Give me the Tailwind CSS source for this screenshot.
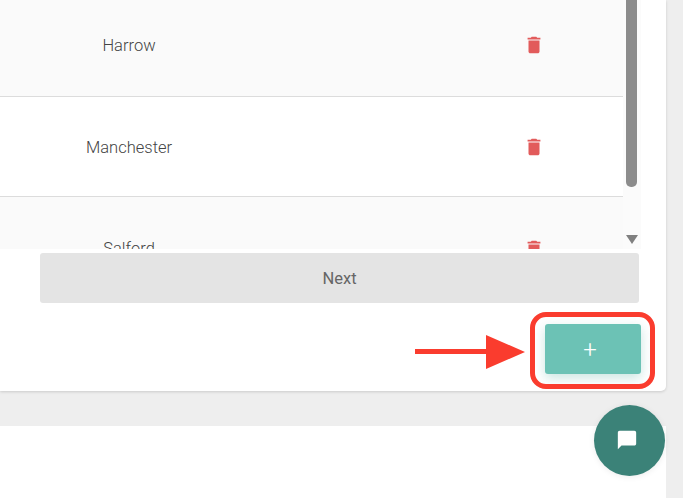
<!DOCTYPE html>
<html lang="en">
<head>
    <meta charset="UTF-8">
    <meta name="viewport" content="width=device-width, initial-scale=1.0">
    <title>Locations</title>
    <script src="https://cdn.jsdelivr.net/npm/@tailwindcss/browser@4"></script>
</head>
<body class="relative h-[498px] w-[683px] overflow-hidden bg-[#eeeeee] font-['Roboto',sans-serif] text-[16px] font-light text-[#444444]">
    <!-- card with the table -->
    <div class="h-[391px] w-[666px] rounded-br-[5px] bg-white shadow-[0_1px_3px_rgba(0,0,0,0.15)]">
        <div class="flex h-[249px]">
            <div class="h-[249px] w-[623px] overflow-hidden">
                <div class="grid h-[97px] grid-cols-[258px_1fr_178px] items-center border-b border-[#dcdcdc] bg-[#fafafa] pb-[6px]">
                    <span class="pt-[2px] text-center text-[16.5px]">Harrow</span>
                    <span></span>
                    <svg class="mx-auto h-[22px] w-[22px] fill-[#e25b5b]" viewBox="0 0 24 24"><path d="M6 19c0 1.1.9 2 2 2h8c1.1 0 2-.9 2-2V7H6v12zM19 4h-3.5l-1-1h-5l-1 1H5v2h14V4z"/></svg>
                </div>
                <div class="grid h-[100px] grid-cols-[258px_1fr_178px] items-center border-b border-[#dcdcdc] bg-white">
                    <span class="pt-[4px] text-center text-[16.5px]">Manchester</span>
                    <span></span>
                    <svg class="mx-auto h-[22px] w-[22px] fill-[#e25b5b]" viewBox="0 0 24 24"><path d="M6 19c0 1.1.9 2 2 2h8c1.1 0 2-.9 2-2V7H6v12zM19 4h-3.5l-1-1h-5l-1 1H5v2h14V4z"/></svg>
                </div>
                <div class="grid h-[103px] grid-cols-[258px_1fr_178px] items-center bg-[#fafafa]">
                    <span class="pt-[2px] text-center text-[16.5px]">Salford</span>
                    <span></span>
                    <svg class="mx-auto h-[22px] w-[22px] fill-[#e25b5b]" viewBox="0 0 24 24"><path d="M6 19c0 1.1.9 2 2 2h8c1.1 0 2-.9 2-2V7H6v12zM19 4h-3.5l-1-1h-5l-1 1H5v2h14V4z"/></svg>
                </div>
            </div>
            <!-- scrollbar -->
            <div class="flex h-[249px] w-[18px] flex-col items-center bg-[#fbfbfb] pl-[1px] pr-[2px]">
                <div class="h-[187px] w-[11px] rounded-b-[5px] bg-[#8c8c8c]"></div>
                <svg class="mt-[48px] h-[9px] w-[12px] fill-[#808080]" viewBox="0 0 12 9"><path d="M0 0h12L6 9z"/></svg>
            </div>
        </div>

        <div class="ml-[40px] mt-[4px] flex h-[50px] w-[599px] items-center justify-center rounded-[3px] bg-[#e4e4e4] pt-[3px] text-[16.5px] font-normal text-[#666666]">Next</div>

        <div class="mt-[21px] flex w-[641px] justify-end">
            <button class="flex h-[50px] w-[96px] items-center justify-center rounded-[3px] bg-[#6cc2b5] pr-[6px] pt-[1px] text-[24px] font-light text-white shadow-[0_4px_12px_rgba(80,170,155,0.3)]">+</button>
        </div>
    </div>

    <!-- lower panel -->
    <div class="mt-[35px] h-[72px] w-[666px] bg-white"></div>

    <!-- annotation over the add button -->
    <div class="absolute left-[530px] top-[312px] h-[77px] w-[125px] rounded-[16px] border-[5px] border-[#fa3c2e]"></div>
    <svg class="absolute left-[414px] top-[334px] h-[36px] w-[112px] fill-[#fa3c2e]" viewBox="0 0 112 36">
        <path d="M1 15h71V1l39 17-39 17V20H1z"/>
    </svg>

    <!-- chat button -->
    <button class="absolute left-[594px] top-[405px] flex h-[71px] w-[71px] items-center justify-center rounded-full bg-[#3b8278] pb-[2px] pr-[5px] shadow-[0_1px_6px_rgba(0,0,0,0.08)]">
        <svg class="h-[22px] w-[22px] fill-white" viewBox="0 0 24 24"><path d="M20 2H4c-1.1 0-2 .9-2 2v18l4-4h14c1.1 0 2-.9 2-2V4c0-1.1-.9-2-2-2z"/></svg>
    </button>
</body>
</html>
